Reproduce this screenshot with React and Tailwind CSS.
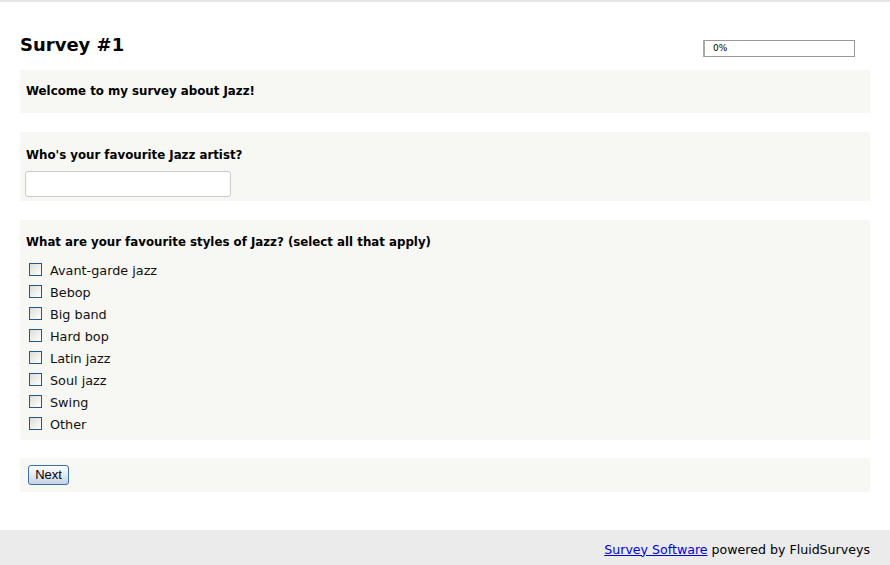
import React from 'react';

const styles = ['Avant-garde jazz', 'Bebop', 'Big band', 'Hard bop', 'Latin jazz', 'Soul jazz', 'Swing', 'Other'];

const App = () => {
    return (
        <div className="w-[890px] h-[565px] bg-white flex flex-col text-black" style={{ fontFamily: '"DejaVu Sans", Verdana, sans-serif' }}>
            <div className="h-[2px] bg-[#e6e6e6]" />
            <div className="flex-1 px-5">
                <div className="flex items-start justify-between pt-[31px] h-[68px]">
                    <h1 className="text-[18px] font-bold leading-[24px]">Survey #1</h1>
                    <div className="mt-[7px] mr-[15px] w-[152px] h-[17px] border border-[#999] border-l-2 border-l-[#aaa] text-[9px] leading-[15px] pl-[8px]">0%</div>
                </div>
                <div className="bg-[#f7f7f3] h-[43px] px-[6px] pt-[13px]">
                    <p className="text-[11.8px] font-bold leading-[16px]">Welcome to my survey about Jazz!</p>
                </div>
                <div className="bg-[#f7f7f3] mt-[19px] h-[69px] px-[6px] pt-[15px]">
                    <p className="text-[11.8px] font-bold leading-[16px]">Who's your favourite Jazz artist?</p>
                    <input type="text" className="mt-[8px] -ml-px w-[206px] h-[26px] bg-white border border-[#ccc] rounded-[3px]" />
                </div>
                <div className="bg-[#f7f7f3] mt-[19px] h-[220px] px-[6px] pt-[14px]">
                    <p className="text-[11.8px] font-bold leading-[16px]">What are your favourite styles of Jazz? (select all that apply)</p>
                    <ul className="mt-[10px]">
                        {styles.map((s) => (
                            <li key={s} className="flex items-center h-[22px]">
                                <span className="ml-[3px] w-[13px] h-[13px] border border-[#1d5a94] bg-gradient-to-br from-[#dcdcd7] to-white mb-[3px]" />
                                <span className="ml-[8px] text-[12.8px] text-[#111]">{s}</span>
                            </li>
                        ))}
                    </ul>
                </div>
                <div className="bg-[#f7f7f3] mt-[18px] h-[34px] px-[8px] flex items-center">
                    <button className="w-[41px] h-[20px] text-[13px] leading-[18px] border border-[#3c6ea8] rounded-[3px] bg-gradient-to-b from-white to-[#c3d3e6]" style={{ fontFamily: '"Liberation Sans", Arial, sans-serif' }}>Next</button>
                </div>
            </div>
            <div className="h-[35px] bg-[#ebebeb] flex items-center justify-end pr-[20px] pt-[5px] text-[12.6px]">
                <a href="#" className="text-[#0000ee] underline">Survey Software</a>
                <span className="ml-[4px]">powered by FluidSurveys</span>
            </div>
        </div>
    );
};

export default App;
